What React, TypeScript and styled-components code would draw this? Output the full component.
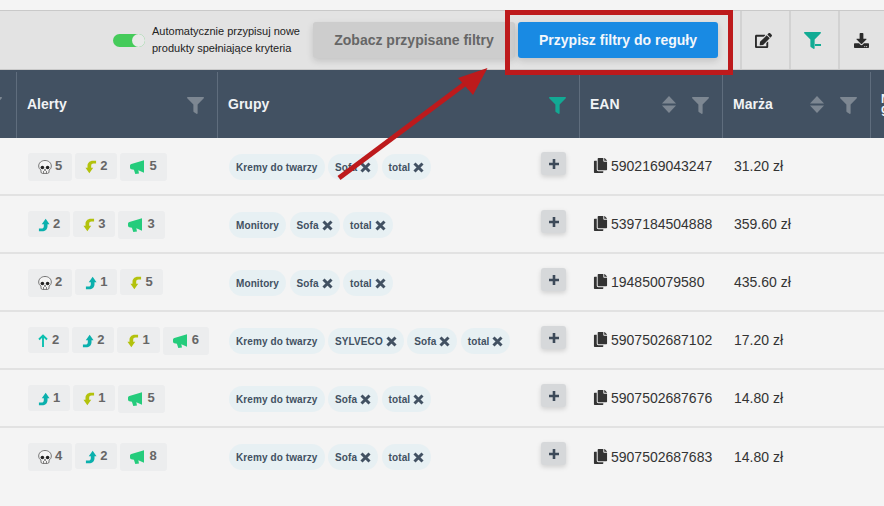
import styled, { createGlobalStyle } from 'styled-components';
import { FaCopy, FaDownload, FaEdit, FaFilter } from 'react-icons/fa';

const GlobalStyle = createGlobalStyle`
	html, body {
		margin: 0;
		padding: 0;
		background: #f4f4f4;
	}
	body {
		font-family: "Liberation Sans", Arial, sans-serif;
	}
`;

const Page = styled.div`
	position: relative;
	width: 884px;
	height: 506px;
	overflow: hidden;
	background: #f4f4f4;
	padding-top: 10px;
	box-sizing: border-box;
`;

const Toolbar = styled.div`
	display: flex;
	align-items: center;
	justify-content: flex-end;
	height: 60px;
	margin-right: -3px;
	box-sizing: border-box;
	background: #e3e3e3;
	border-top: 1px solid #c9c9c9;
	border-bottom: 1px solid #c9c9c9;
`;

const Toggle = styled.div`
	position: relative;
	width: 32px;
	height: 13px;
	border-radius: 7px;
	background: #45cb5a;
	margin-right: 7px;

	&::after {
		content: '';
		position: absolute;
		right: 0;
		top: 0;
		width: 13px;
		height: 13px;
		border-radius: 50%;
		background: #e9e9e9;
	}
`;

const ToggleLabel = styled.div`
	width: 161px;
	font-size: 11px;
	line-height: 17px;
	color: #222;
`;

const ActionButton = styled.button<{ $primary?: boolean }>`
	height: 36px;
	padding: 0;
	border: 0;
	border-radius: 3px;
	font-family: "Liberation Sans", Arial, sans-serif;
	font-size: 14px;
	font-weight: 700;
	width: ${({ $primary }) => ($primary ? '200px' : '202px')};
	margin-right: ${({ $primary }) => ($primary ? '22px' : '3px')};
	color: ${({ $primary }) => ($primary ? '#f3f7fb' : '#666')};
	background: ${({ $primary }) => ($primary ? '#198ae3' : '#cdcdcd')};
	box-shadow: 0 3px 7px rgba(0, 0, 0, 0.14);
`;

const ToolIcon = styled.div<{ $color?: string; $size?: number }>`
	position: relative;
	display: flex;
	align-items: center;
	justify-content: center;
	width: 49px;
	height: 58px;
	box-sizing: border-box;
	padding-right: 5px;
	border-left: 2px solid #d2d2d2;
	font-size: ${({ $size = 17 }) => $size}px;
	color: ${({ $color = '#2b2b2b' }) => $color};
`;

const Dash = styled.span`
	position: absolute;
	left: 24px;
	top: 33px;
	width: 6px;
	height: 1.5px;
	background: #12ab94;
`;

const columns = '17px 201px 362px 143px 148px 13px';

const HeadRow = styled.div`
	display: grid;
	grid-template-columns: ${columns};
	height: 68px;
	background: #425162;
	color: #f1f3f5;
`;

const HeadCell = styled.div`
	display: flex;
	align-items: center;
	gap: 16px;
	min-width: 0;
	padding: 0 13px 2px 10px;
	margin-top: 2px;
	height: 66px;
	box-sizing: border-box;
	border-right: 1px solid #5f6d7d;
	font-size: 14px;
	font-weight: 700;

	&:last-child {
		border-right: 0;
	}
`;

const EdgeCell = styled(HeadCell)`
	padding: 0 0 2px;
`;

const HeadTitle = styled.span`
	flex: 1;
	white-space: nowrap;
`;

const ClippedHead = styled.div`
	font-size: 12px;
	line-height: 10px;
	font-weight: 700;
	white-space: nowrap;
`;

const HeadFilter = styled(FaFilter)<{ $active?: boolean }>`
	flex: none;
	font-size: 17px;
	margin-top: 3px;
	color: ${({ $active }) => ($active ? '#12a994' : '#7d8792')};
`;

const EdgeFilter = styled(HeadFilter)`
	margin-left: -15px;
`;

const SortIcon = styled.svg`
	flex: none;
	width: 14px;
	height: 17px;
	fill: #7d8792;
`;

const Row = styled.div`
	display: grid;
	grid-template-columns: ${columns};
	height: 58px;
	box-sizing: border-box;
	border-bottom: 2px solid #e2e2e2;

	&:last-of-type {
		border-bottom: 0;
	}
`;

const AlertCell = styled.div`
	grid-column: 2 / 3;
	display: flex;
	align-items: flex-start;
	gap: 3px;
	padding: 15px 0 0 11px;
`;

const Badge = styled.div<{ $tall?: boolean; $gap: number }>`
	display: flex;
	align-items: flex-start;
	gap: ${({ $gap }) => $gap}px;
	height: ${({ $tall }) => ($tall ? '28px' : '26px')};
	box-sizing: border-box;
	padding: 5px 10px 0;
	border-radius: 3px;
	background: #ecedee;
	font-size: 13px;
	font-weight: 700;
	line-height: 15px;
	color: #666;
`;

const AlertIcon = styled.svg<{ $w: number }>`
	flex: none;
	width: ${({ $w }) => $w}px;
	height: 14px;
	margin-top: 2px;
`;

const GroupCell = styled.div`
	display: flex;
	justify-content: space-between;
	align-items: flex-start;
	padding: 16px 14px 0 11px;
`;

const Chips = styled.div`
	display: flex;
	gap: 3.5px;
`;

const Chip = styled.div`
	display: flex;
	align-items: center;
	gap: 3px;
	height: 26px;
	padding: 0 7px;
	border-radius: 13px;
	background: #e7f0f3;
	font-size: 10px;
	font-weight: 700;
	letter-spacing: 0.1px;
	color: #425162;
	white-space: nowrap;
`;

const CrossIcon = styled.svg`
	width: 11px;
	height: 11px;
	margin-top: 1px;
	stroke: #425162;
	stroke-width: 3;
`;

const PlusButton = styled.div`
	display: flex;
	align-items: center;
	justify-content: center;
	width: 25px;
	height: 23px;
	margin-top: -2px;
	border-radius: 3px;
	background: #d6d8da;
	box-shadow: 0 2px 5px rgba(0, 0, 0, 0.15);
`;

const PlusIcon = styled.svg`
	width: 10px;
	height: 10px;
	stroke: #3d4a59;
	stroke-width: 2.6;
`;

const EanCell = styled.div`
	display: flex;
	align-items: center;
	gap: 3px;
	padding-left: 13px;
	font-size: 14px;
	color: #333;

	svg {
		font-size: 15px;
		margin-top: -2px;
	}
`;

const PriceCell = styled.div`
	display: flex;
	align-items: center;
	padding-left: 11px;
	font-size: 14px;
	color: #333;
`;

const Annotation = styled.svg`
	position: absolute;
	left: 0;
	top: 0;
	width: 884px;
	height: 506px;
	pointer-events: none;
`;

type AlertKind = 'skull' | 'up' | 'down' | 'horn' | 'arrow';
type RowData = {
	alerts: [AlertKind, number][];
	groups: string[];
	ean: string;
	price: string;
};

const rows: RowData[] = [
	{
		alerts: [['skull', 5], ['down', 2], ['horn', 5]],
		groups: ['Kremy do twarzy', 'Sofa', 'total'],
		ean: '5902169043247',
		price: '31.20 zł',
	},
	{
		alerts: [['up', 2], ['down', 3], ['horn', 3]],
		groups: ['Monitory', 'Sofa', 'total'],
		ean: '5397184504888',
		price: '359.60 zł',
	},
	{
		alerts: [['skull', 2], ['up', 1], ['down', 5]],
		groups: ['Monitory', 'Sofa', 'total'],
		ean: '194850079580',
		price: '435.60 zł',
	},
	{
		alerts: [['arrow', 2], ['up', 2], ['down', 1], ['horn', 6]],
		groups: ['Kremy do twarzy', 'SYLVECO', 'Sofa', 'total'],
		ean: '5907502687102',
		price: '17.20 zł',
	},
	{
		alerts: [['up', 1], ['down', 1], ['horn', 5]],
		groups: ['Kremy do twarzy', 'Sofa', 'total'],
		ean: '5907502687676',
		price: '14.80 zł',
	},
	{
		alerts: [['skull', 4], ['up', 2], ['horn', 8]],
		groups: ['Kremy do twarzy', 'Sofa', 'total'],
		ean: '5907502687683',
		price: '14.80 zł',
	},
];

const hookPath = 'M8.300 .3L12.500 6.300H10.300V8.300C10.300 11.500 7.800 13.800 4.500 13.800H1V10.900H3.800C5.300 10.900 6.300 10 6.300 8.300V6.300H4.100Z';

const alertIcon = (kind: AlertKind) => {
	switch (kind) {
		case 'skull':
			return (
				<AlertIcon $w={14} viewBox="0 0 14 14">
					<path
						d="M7 .5C3.300.5.7 2.900.7 6c0 1.900.9 3.300 2.300 4.100V12c0 .8.6 1.400 1.400 1.400h5.200c.8 0 1.400-.6 1.400-1.400v-1.900c1.400-.8 2.300-2.200 2.300-4.100C13.300 2.900 10.700.5 7 .5z"
						fill="#f4f4f4"
						stroke="#555"
						strokeWidth="0.8"
					/>
					<circle cx="4.400" cy="7.500" r="1.800" fill="#222" />
					<circle cx="9.600" cy="7.500" r="1.800" fill="#222" />
					<path d="M7 8.500l1 2H6z" fill="#222" />
					<path d="M5.500 11v2.400M8.500 11v2.400" stroke="#555" strokeWidth="0.7" />
				</AlertIcon>
			);
		case 'up':
			return (
				<AlertIcon $w={12} viewBox="0 0 13 14">
					<path d={hookPath} fill="#0bb0ad" />
				</AlertIcon>
			);
		case 'down':
			return (
				<AlertIcon $w={12} viewBox="0 0 13 14">
					<path d={hookPath} fill="#b3c20d" transform="rotate(180 6.500 7)" />
				</AlertIcon>
			);
		case 'horn':
			return (
				<AlertIcon $w={14} viewBox="0 0 14 14">
					<path
						d="M14 .3V12.800L8.300 10.300 9 13.600 5.300 14 3.900 9.800 1.300 9.300C.4 9 0 8.200 0 7.200V5.900C0 5 .5 4.300 1.400 4.100Z"
						fill="#25cc7c"
					/>
				</AlertIcon>
			);
		default:
			return (
				<AlertIcon $w={10} viewBox="0 0 10 14">
					<path d="M5 1.500V13M1 5.500L5 1.500L9 5.500" fill="none" stroke="#0cc0b0" strokeWidth="1.900" />
				</AlertIcon>
			);
	}
};

const badgeGap = (kind: AlertKind) => (kind === 'horn' ? 5 : kind === 'arrow' ? 4 : 3);

const Sort = () => (
	<SortIcon viewBox="0 0 14 17">
		<path d="M7 0L14 7.500H0Z" />
		<path d="M7 17L14 9.500H0Z" />
	</SortIcon>
);

export default function App() {
	return (
		<Page>
			<GlobalStyle />
			<Toolbar>
				<Toggle />
				<ToggleLabel>
					Automatycznie przypisuj nowe
					<br />
					produkty spełniające kryteria
				</ToggleLabel>
				<ActionButton>Zobacz przypisane filtry</ActionButton>
				<ActionButton $primary>Przypisz filtry do reguły</ActionButton>
				<ToolIcon>
					<FaEdit />
				</ToolIcon>
				<ToolIcon $color="#12ab94">
					<FaFilter />
					<Dash />
				</ToolIcon>
				<ToolIcon $size={15}>
					<FaDownload />
				</ToolIcon>
			</Toolbar>
			<HeadRow>
				<EdgeCell>
					<EdgeFilter />
				</EdgeCell>
				<HeadCell>
					<HeadTitle>Alerty</HeadTitle>
					<HeadFilter />
				</HeadCell>
				<HeadCell>
					<HeadTitle>Grupy</HeadTitle>
					<HeadFilter $active />
				</HeadCell>
				<HeadCell>
					<HeadTitle>EAN</HeadTitle>
					<Sort />
					<HeadFilter />
				</HeadCell>
				<HeadCell>
					<HeadTitle>Marża</HeadTitle>
					<Sort />
					<HeadFilter />
				</HeadCell>
				<HeadCell>
					<ClippedHead>
						Narzut
						<br />
						gr
					</ClippedHead>
				</HeadCell>
			</HeadRow>
			{rows.map((row) => (
				<Row key={row.ean}>
					<AlertCell>
						{row.alerts.map(([kind, count], i) => (
							<Badge key={i} $gap={badgeGap(kind)} $tall={kind === 'skull' || kind === 'horn'}>
								{alertIcon(kind)}
								{count}
							</Badge>
						))}
					</AlertCell>
					<GroupCell>
						<Chips>
							{row.groups.map((group) => (
								<Chip key={group}>
									{group}
									{group !== 'Kremy do twarzy' && group !== 'Monitory' && (
										<CrossIcon viewBox="0 0 11 11">
											<path d="M1.500 1.500L9.500 9.500M9.500 1.500L1.500 9.500" />
										</CrossIcon>
									)}
								</Chip>
							))}
						</Chips>
						<PlusButton>
							<PlusIcon viewBox="0 0 10 10">
								<path d="M5 0V10M0 5H10" />
							</PlusIcon>
						</PlusButton>
					</GroupCell>
					<EanCell>
						<FaCopy />
						{row.ean}
					</EanCell>
					<PriceCell>{row.price}</PriceCell>
				</Row>
			))}
			<Annotation viewBox="0 0 884 506">
				<rect x="507.500" y="12.500" width="223" height="60" fill="none" stroke="#bd1a1c" strokeWidth="5" />
				<path d="M339 178L470 80" stroke="#bd1a1c" strokeWidth="5" />
				<path d="M487.500 68L458 78L473 95z" fill="#bd1a1c" />
			</Annotation>
		</Page>
	);
}
